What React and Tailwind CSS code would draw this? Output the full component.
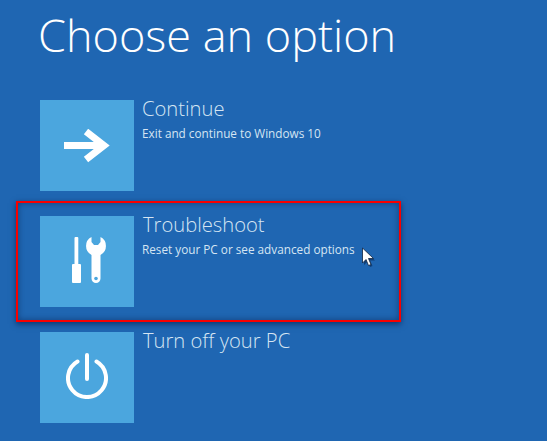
const FONT = "font-['Open_Sans','Liberation_Sans',sans-serif]";

function ArrowIcon() {
  return (
    <svg width="46" height="34" viewBox="0 0 46 34" fill="none" stroke="#fff">
      <path d="M0 16.500H40" strokeWidth="7" />
      <path d="M22 2.500L40 16.500L22 30.500" strokeWidth="7" />
    </svg>
  );
}

function ToolsIcon() {
  return (
    <svg className="ml-[4px] mb-[4px]" width="34" height="46" viewBox="0 0 34 46" fill="#fff">
      <rect x="2.500" y="0" width="3.800" height="28" rx="1" />
      <rect x="0" y="27" width="9" height="19" rx="1" />
      <path d="M19.500 0.100V5L22 8H26L28.500 5V0.100A10 10 0 0 1 28.500 17.900V41.500A4.500 4.500 0 0 1 19.500 41.500V17.900A10 10 0 0 1 19.500 0.100Z" />
      <circle cx="24" cy="41.500" r="1.800" fill="#4ba6de" />
    </svg>
  );
}

function PowerIcon() {
  return (
    <svg className="mb-[4px]" width="42" height="46" viewBox="0 0 42 46" fill="none" stroke="#fff" strokeWidth="4" strokeLinecap="round">
      <path d="M21 2V26" />
      <path d="M11.500 8.600A19 19 0 1 0 30.500 8.600" />
    </svg>
  );
}

function Tile({ children }) {
  return (
    <div className="w-[94px] h-[91px] shrink-0 bg-[#4ba6de] flex items-center justify-center">
      {children}
    </div>
  );
}

function Option({ icon, title, subtitle, titleClass }) {
  return (
    <div className="flex">
      <Tile>{icon}</Tile>
      <div className="ml-2 text-[#d5e5f3]">
        <div className={`text-[20.2px] leading-[20px] mt-[-2px] font-light ${titleClass}`}>{title}</div>
        {subtitle && <div className="text-[11.75px] leading-[14px] mt-[8px]">{subtitle}</div>}
      </div>
    </div>
  );
}

export default function App() {
  return (
    <div className={`relative w-[547px] h-[441px] overflow-hidden bg-[#1f66b2] text-white ${FONT}`}>
      <h1 className="pl-[38px] pt-[6px] h-[100px] text-[45px] leading-[58px] font-light">Choose an option</h1>

      <div className="pl-[40px]">
        <Option icon={<ArrowIcon />} title="Continue" subtitle="Exit and continue to Windows 10" />
      </div>

      <div className="ml-[16px] mt-[10px] w-[385px] h-[121px] border-2 border-[#f80000] pl-[22px] pt-[13px] shadow-[0_2px_6px_rgba(0,20,60,0.6),inset_0_0_6px_rgba(0,20,60,0.45)]">
        <Option icon={<ToolsIcon />} title="Troubleshoot" subtitle="Reset your PC or see advanced options" titleClass="ml-px" />
      </div>

      <div className="pl-[40px] mt-[10px]">
        <Option icon={<PowerIcon />} title="Turn off your PC" titleClass="ml-px" />
      </div>

      {/* mouse pointer */}
      <svg className="absolute left-[361px] top-[247px]" width="16" height="23" viewBox="0 0 16 23">
        <path d="M3 3V18L6.500 14.500L9 20L11.500 19L9 13.500H14Z" fill="#00183c" opacity="0.5" />
        <path d="M1.500 1V16L5 12.500L7.500 18.500L10 17.500L7.500 11.500H12.500Z" fill="#fff" stroke="#10233f" strokeWidth="0.8" />
      </svg>
    </div>
  );
}
